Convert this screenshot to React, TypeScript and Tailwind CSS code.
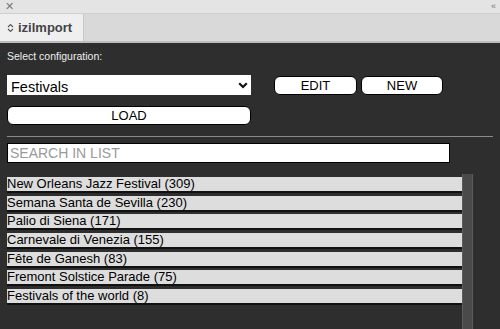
import { useState } from "react";

const festivals = [
  { name: "New Orleans Jazz Festival", count: 309 },
  { name: "Semana Santa de Sevilla", count: 230 },
  { name: "Palio di Siena", count: 171 },
  { name: "Carnevale di Venezia", count: 155 },
  { name: "Fête de Ganesh", count: 83 },
  { name: "Fremont Solstice Parade", count: 75 },
  { name: "Festivals of the world", count: 8 },
];

export default function App() {
  const [config, setConfig] = useState("Festivals");
  const [search, setSearch] = useState("");

  return (
    <div className="flex h-[329px] w-[500px] flex-col overflow-hidden bg-[#2e2e2e] font-['Liberation_Sans',Arial,sans-serif]">
      {/* panel chrome */}
      <div className="flex h-[14px] items-center justify-between border-b border-[#cfcfcf] bg-[#e4e4e4] px-[5px] text-[#777]">
        <span className="text-[11px] leading-none">✕</span>
        <span className="text-[9px] leading-none tracking-[-1px]">‹‹</span>
      </div>
      <div className="flex h-[29px] border-b-2 border-[#bdbdbd] bg-[#d9d9d9]">
        <div className="flex w-[84px] items-center gap-[4px] border-r border-[#c8c8c8] bg-[#efefef] pl-[7px]">
          <svg width="7" height="10" viewBox="0 0 7 10" fill="none" stroke="#555" strokeWidth="1.1">
            <path d="M1 4 L3.5 1.5 L6 4" />
            <path d="M1 6 L3.5 8.5 L6 6" />
          </svg>
          <span className="text-[13px] font-bold text-[#444]">izilmport</span>
        </div>
      </div>

      <div className="flex flex-1 flex-col px-[7px]">
        <p className="mt-[6px] text-[10.5px] leading-[14px] text-[#eeeeee]">Select configuration:</p>

        <div className="mt-[12px] flex items-center">
          <div className="relative h-[20px] w-[244px] bg-white">
            <select
              value={config}
              onChange={(e) => setConfig(e.target.value)}
              className="h-full w-full appearance-none bg-transparent pl-[4px] text-[14.5px] leading-[20px] text-black outline-none"
            >
              <option>Festivals</option>
            </select>
            <svg className="pointer-events-none absolute right-[3px] top-[7px]" width="10" height="7" viewBox="0 0 10 7" fill="none" stroke="#111" strokeWidth="2.2">
              <path d="M1.2 1.2 L5 5 L8.8 1.2" />
            </svg>
          </div>
          <button className="ml-[23px] h-[19px] w-[83px] rounded-[6px] border border-black bg-white text-[13px] leading-none text-black">
            EDIT
          </button>
          <button className="ml-[4px] h-[19px] w-[82px] rounded-[6px] border border-black bg-white text-[13px] leading-none text-black">
            NEW
          </button>
        </div>

        <button className="mt-[11px] h-[19px] w-[244px] rounded-[6px] border border-black bg-white text-[13px] leading-none text-black">
          LOAD
        </button>

        <div className="mt-[11px] h-px w-[486px] bg-[#8a8a8a]" />

        <input
          value={search}
          onChange={(e) => setSearch(e.target.value)}
          placeholder="SEARCH IN LIST"
          className="mt-[6px] h-[20px] w-[443px] border border-black bg-white px-[2px] text-[14px] text-black outline-none placeholder:text-[#9a9a9a]"
        />

        <div className="mt-[11px] flex flex-1">
          <div className="flex w-[455px] flex-col gap-[2.7px] pt-[3px]">
            {festivals.map((f) => (
              <div
                key={f.name}
                className="h-[16px] border-b-2 border-[#111] bg-[#dddddd] text-[13px] leading-[14px] text-black"
              >
                {f.name} ({f.count})
              </div>
            ))}
          </div>
          <div className="w-[11px] border-x border-[#5c5c5c] bg-[#4a4a4a]" />
        </div>
      </div>
    </div>
  );
}
